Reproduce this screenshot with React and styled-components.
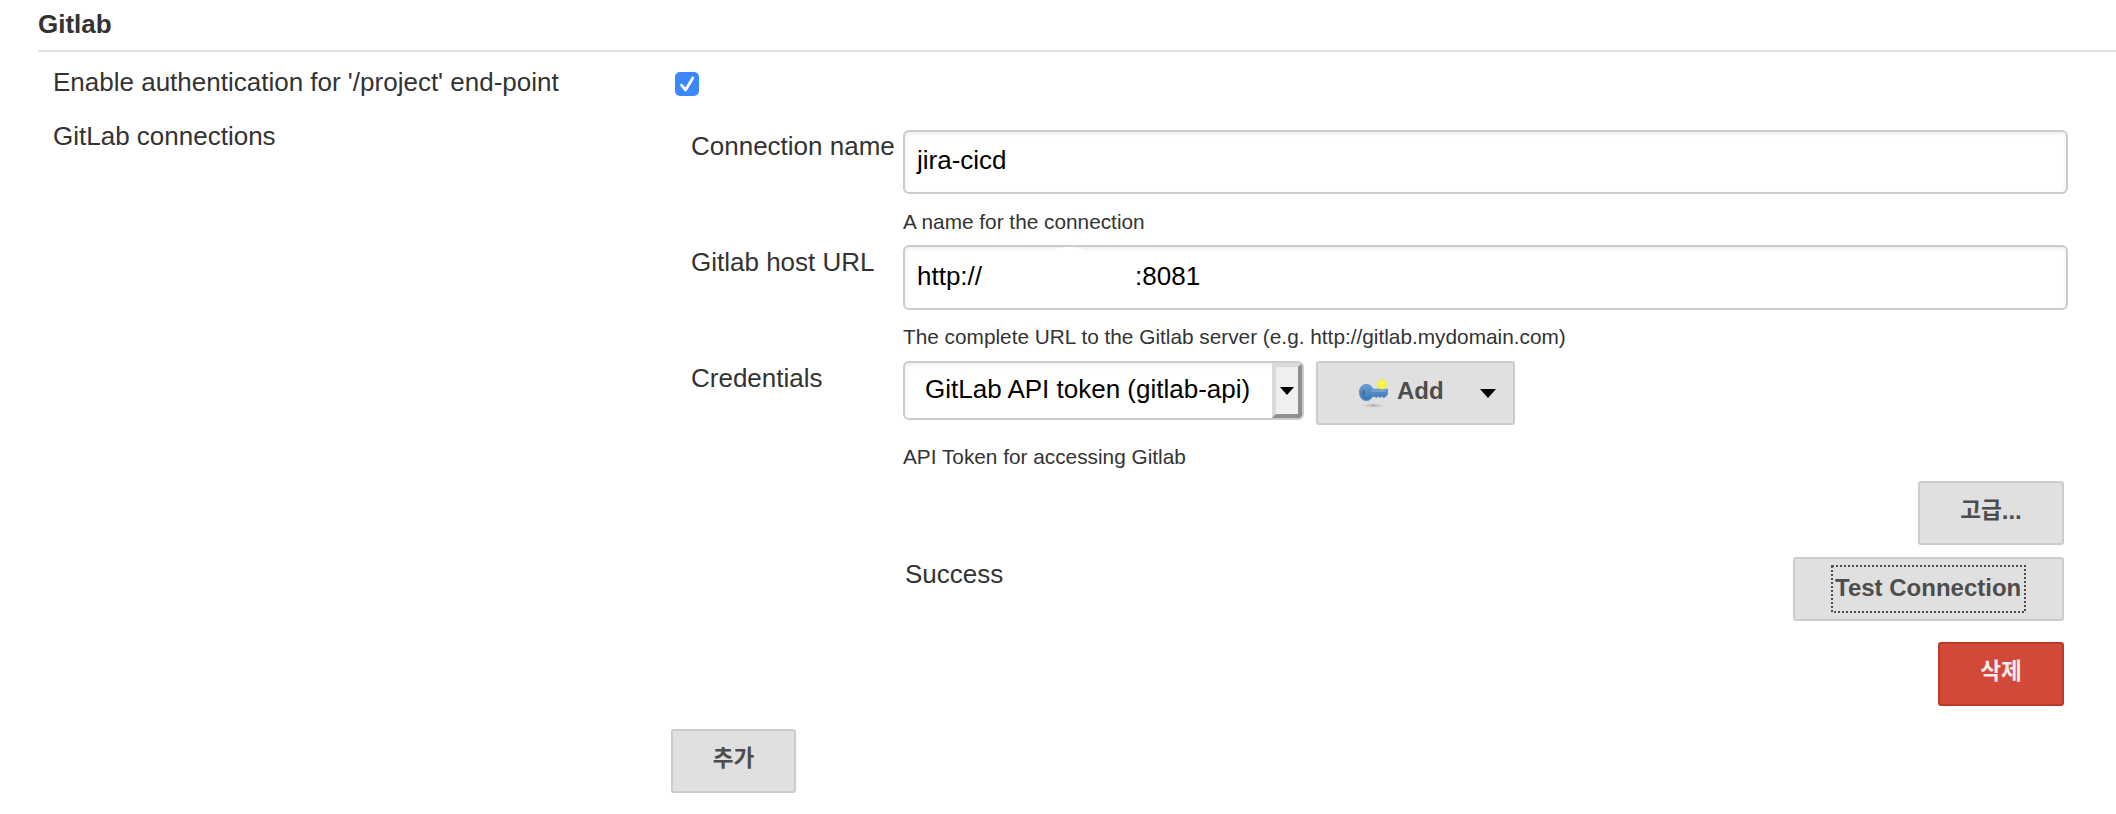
import React from "react";
import styled, { createGlobalStyle } from "styled-components";

const GlobalStyle = createGlobalStyle`
  *, *::before, *::after { box-sizing: border-box; }
  body {
    margin: 0;
    background: #fff;
    color: #333;
    font: 26px/30px "Liberation Sans", "Noto Sans CJK KR", sans-serif;
  }
`;

const Page = styled.main`
  width: 2116px;
  height: 814px;
  overflow: hidden;
  padding: 9px 0 0 38px;
`;

const SectionTitle = styled.h1`
  margin: 0;
  padding-bottom: 11px;
  border-bottom: 2px solid #e0e0e0;
  font-size: 26px;
  line-height: 30px;
  font-weight: bold;
`;

const SettingRow = styled.section`
  display: grid;
  grid-template-columns: 618px 1fr;
  padding: ${(p) => (p.$first ? "15px 0 0 15px" : "0 0 0 15px")};
  height: ${(p) => (p.$first ? "69px" : "auto")};
`;

const Label = styled.div`
  white-space: nowrap;
`;

const Checkbox = styled.span`
  display: flex;
  align-items: center;
  justify-content: center;
  width: 24px;
  height: 24px;
  margin: 5px 0 0 4px;
  border-radius: 5px;
  background: #3b88fd;
`;

const Connections = styled.div`
  display: flex;
  flex-direction: column;
  width: 1397px;
  padding-top: 9px;
`;

const FieldRow = styled.div`
  display: grid;
  grid-template-columns: 212px 1fr;
  padding-left: 20px;
  height: ${(p) => p.$height}px;
`;

const FieldLabel = styled(Label)`
  padding-top: ${(p) => p.$top}px;
`;

const Field = styled.div`
  display: flex;
  flex-direction: column;
`;

const TextBox = styled.div`
  position: relative;
  display: flex;
  height: ${(p) => p.$height}px;
  padding: ${(p) => p.$top}px 12px 0;
  border: 2px solid #ccc;
  border-radius: 6px;
  background: #fff;
  box-shadow: inset 0 2px 4px rgba(0, 0, 0, 0.08);
  color: #000;
`;

const HiddenHost = styled.span`
  width: 153px;
`;

const BrushMark = styled.span`
  position: absolute;
  left: 148px;
  top: 0;
  width: 32px;
  height: 10px;
  border-radius: 50%;
  background: #fff;
`;

const Help = styled.div`
  margin-top: ${(p) => p.$gap}px;
  font-size: 20.8px;
  line-height: 24px;
`;

const Controls = styled.div`
  display: flex;
  align-items: flex-start;
  gap: 12px;
`;

const Select = styled.div`
  display: flex;
  justify-content: space-between;
  width: 401px;
  height: 59px;
  padding-left: 20px;
  border: 2px solid #ccc;
  border-radius: 6px;
  background: #fff;
  box-shadow: inset 0 2px 4px rgba(0, 0, 0, 0.08);
  color: #000;
  overflow: hidden;
`;

const SelectValue = styled.span`
  padding-top: 11px;
  white-space: nowrap;
`;

const SelectArrow = styled.span`
  display: flex;
  align-items: center;
  justify-content: center;
  width: 30px;
  border: 4px solid;
  border-color: #dadada #8f8f8f #8f8f8f #dadada;
  background: #efefef;
`;

const Button = styled.button`
  display: flex;
  align-items: flex-start;
  justify-content: center;
  width: ${(p) => p.$width}px;
  height: 64px;
  padding: 6px 0 0;
  border: 2px solid ${(p) => (p.$danger ? "#be3829" : "#ccc")};
  border-radius: 3px;
  background: ${(p) => (p.$danger ? "#d24939" : "#e0e0e0")};
  color: ${(p) => (p.$danger ? "#f5ebea" : "#4d4d4d")};
  font: bold 24px/46px "Liberation Sans", "Noto Sans CJK KR", sans-serif;
`;

const AddButton = styled(Button)`
  justify-content: flex-start;
  padding-left: 40px;
`;

const AddText = styled.span`
  margin: 0 36px 0 7px;
  line-height: 44px;
`;

const AddCaret = styled.svg`
  margin-top: 20px;
`;

const KeyIcon = styled.svg`
  margin-top: 9px;
`;

const Korean = styled.span`
  font-family: "Noto Sans CJK KR", sans-serif;
  font-size: 22.6px;
  line-height: 40px;
`;

const Ellipsis = styled.span`
  line-height: 44px;
`;

const FocusRing = styled.svg`
  position: absolute;
  inset: 0;
`;

const FocusText = styled.span`
  position: relative;
  width: 195px;
  height: 48px;
  padding-left: 4px;
  text-align: left;
  white-space: nowrap;
`;

const ActionRow = styled.div`
  display: flex;
  justify-content: ${(p) => (p.$split ? "space-between" : "flex-end")};
  padding: 0 4px 0 234px;
  margin-top: ${(p) => p.$gap}px;
`;

const Status = styled(Label)`
  padding-top: 2px;
`;

const Footer = styled.div`
  display: flex;
  margin-top: 23px;
`;

function Key() {
  return (
    <KeyIcon width="32" height="32" viewBox="0 0 32 32">
      <defs>
        <radialGradient id="glow">
          <stop offset="0" stopColor="#ffff70" />
          <stop offset="0.65" stopColor="#fbee35" />
          <stop offset="1" stopColor="#f4ec75" stopOpacity="0" />
        </radialGradient>
        <radialGradient id="shade">
          <stop offset="0" stopColor="#a8a8a8" />
          <stop offset="1" stopColor="#d8d8d8" stopOpacity="0" />
        </radialGradient>
        <linearGradient id="metal" x2="0" y2="1">
          <stop offset="0" stopColor="#6c9fd2" />
          <stop offset="1" stopColor="#3974b8" />
        </linearGradient>
      </defs>
      <ellipse cx="15.5" cy="27.5" rx="13" ry="2.8" fill="url(#shade)" />
      <path
        d="M8.5 6.5C4 6.5 1.5 10 1.5 14.4S4.5 23 9 22.5c3-.3 4.8-2 5.7-4.2l2 .2 1.5 1.2 1.7-1.5 1.9 1.3 2-1.2 2 1.4 2.6-1.8 1.1-2v-4.7H14.7C13.8 8.5 12 6.5 8.5 6.5z"
        fill="url(#metal)"
        stroke="#5f91c6"
        strokeWidth="1"
      />
      <path d="M13 13h15" stroke="#8bb3dc" strokeWidth="1" />
      <ellipse cx="5.7" cy="14.8" rx="1.4" ry="2.7" fill="#526c88" />
      <circle cx="24" cy="6.3" r="6" fill="url(#glow)" />
    </KeyIcon>
  );
}

export default function App() {
  return (
    <>
      <GlobalStyle />
      <Page>
        <SectionTitle>Gitlab</SectionTitle>
        <SettingRow $first>
          <Label>Enable authentication for '/project' end-point</Label>
          <Checkbox role="checkbox" aria-checked="true">
            <svg width="24" height="24" viewBox="0 0 24 24">
              <path
                d="M6.5 13.2l4 4.8L17.8 6"
                fill="none"
                stroke="#fff"
                strokeWidth="2.8"
                strokeLinecap="round"
                strokeLinejoin="round"
              />
            </svg>
          </Checkbox>
        </SettingRow>
        <SettingRow>
          <Label>GitLab connections</Label>
          <Connections>
            <FieldRow $height={115}>
              <FieldLabel $top={1}>Connection name</FieldLabel>
              <Field>
                <TextBox $height={64} $top={13}>jira-cicd</TextBox>
                <Help $gap={16}>A name for the connection</Help>
              </Field>
            </FieldRow>
            <FieldRow $height={116}>
              <FieldLabel $top={2}>Gitlab host URL</FieldLabel>
              <Field>
                <TextBox $height={65} $top={14}>
                  <BrushMark />
                  <span>http://</span>
                  <HiddenHost />
                  <span>:8081</span>
                </TextBox>
                <Help $gap={15}>
                  The complete URL to the Gitlab server (e.g. http://gitlab.mydomain.com)
                </Help>
              </Field>
            </FieldRow>
            <FieldRow $height={108}>
              <FieldLabel $top={2}>Credentials</FieldLabel>
              <Field>
                <Controls>
                  <Select>
                    <SelectValue>GitLab API token (gitlab-api)</SelectValue>
                    <SelectArrow>
                      <svg width="14" height="8" viewBox="0 0 14 8">
                        <path d="M0 0h14L7 8z" fill="#000" />
                      </svg>
                    </SelectArrow>
                  </Select>
                  <AddButton $width={199}>
                    <Key />
                    <AddText>Add</AddText>
                    <AddCaret width="16" height="9" viewBox="0 0 16 9">
                      <path d="M0 0h16L8 9z" fill="#000" />
                    </AddCaret>
                  </AddButton>
                </Controls>
                <Help $gap={20}>API Token for accessing Gitlab</Help>
              </Field>
            </FieldRow>
            <ActionRow $gap={12}>
              <Button $width={146}>
                <Korean>고급</Korean>
                <Ellipsis>...</Ellipsis>
              </Button>
            </ActionRow>
            <ActionRow $gap={12} $split>
              <Status>Success</Status>
              <Button $width={271}>
                <FocusText>
                  <FocusRing width="195" height="48" viewBox="0 0 195 48">
                    <rect
                      x="1"
                      y="1"
                      width="193"
                      height="46"
                      fill="none"
                      stroke="#4d4d4d"
                      strokeWidth="2"
                      strokeDasharray="2 2"
                    />
                  </FocusRing>
                  Test Connection
                </FocusText>
              </Button>
            </ActionRow>
            <ActionRow $gap={21}>
              <Button $width={126} $danger>
                <Korean>삭제</Korean>
              </Button>
            </ActionRow>
            <Footer>
              <Button $width={125}>
                <Korean>추가</Korean>
              </Button>
            </Footer>
          </Connections>
        </SettingRow>
      </Page>
    </>
  );
}
